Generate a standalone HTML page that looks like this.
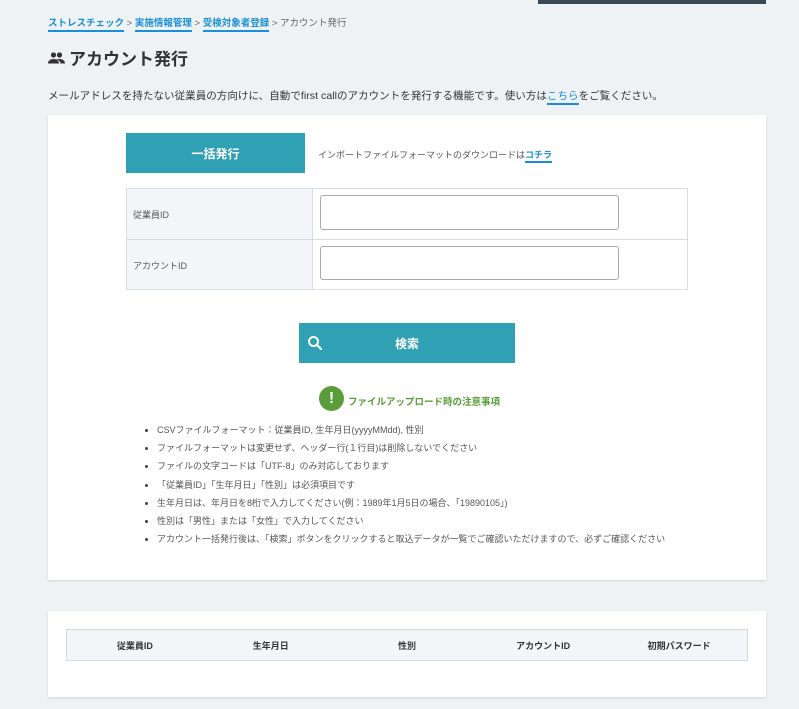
<!DOCTYPE html>
<html><head><meta charset="utf-8"><style>
*{margin:0;padding:0;box-sizing:border-box}
body{width:799px;height:709px;background:#eef2f5;font-family:"Liberation Sans","Noto Sans CJK JP",sans-serif;color:#333;position:relative;overflow:hidden}
.a{position:absolute;white-space:nowrap}
.lk{color:#1a8fd6;font-weight:bold;border-bottom:2px solid #1a8fd6;padding-bottom:1px}
.card{position:absolute;background:#fff;box-shadow:0 1px 2px rgba(0,0,0,.12)}
.btn{position:absolute;background:#30a1b4;color:#fff;font-weight:bold;font-size:12px;display:flex;align-items:center;justify-content:center}
li{font-size:9px;color:#555;line-height:18.2px;list-style:none;position:relative;padding-left:12px}
li:before{content:"";position:absolute;left:0;top:8px;width:3px;height:3px;background:#444;border-radius:50%}
th{font-size:9px;font-weight:bold;color:#333;text-align:center}
</style></head><body>
<div class="a" style="left:538px;top:0;width:228px;height:4px;background:#3a4856"></div>
<div class="a" style="left:48px;top:15px;font-size:9.5px;color:#666"><span class="lk">ストレスチェック</span> &gt; <span class="lk">実施情報管理</span> &gt; <span class="lk">受検対象者登録</span> &gt; アカウント発行</div>
<div class="a" style="left:48px;top:45px;font-size:17px;font-weight:bold;color:#333;display:flex;align-items:center">
<svg width="17" height="12" viewBox="0 0 17 12" style="margin-right:4px"><circle cx="5.5" cy="3" r="2.6" fill="#333"/><circle cx="11.5" cy="3" r="2.6" fill="#333"/><path d="M0 11.5c0-3 2.5-4.5 5.5-4.5s5.5 1.5 5.5 4.5z" fill="#333"/><path d="M8 7.3c1-.3 2.2-.4 3.5-.3 3 .1 5.5 1.5 5.5 4.5h-4.5c0-1.7-1.5-3.3-4.5-4.2z" fill="#333"/></svg>アカウント発行</div>
<div class="a" style="left:48px;top:88px;font-size:10.5px;color:#333;letter-spacing:0.05px">メールアドレスを持たない従業員の方向けに、自動でfirst callのアカウントを発行する機能です。使い方は<span class="lk" style="font-weight:normal">こちら</span>をご覧ください。</div>

<div class="card" style="left:48px;top:115px;width:718px;height:465px"></div>
<div class="btn" style="left:126px;top:133px;width:179px;height:40px">一括発行</div>
<div class="a" style="left:318px;top:148px;font-size:9px;color:#555">インポートファイルフォーマットのダウンロードは<span class="lk">コチラ</span></div>
<div class="a" style="left:126px;top:188px;width:562px;height:102px;border:1px solid #d8dde3"></div>
<div class="a" style="left:127px;top:189px;width:186px;height:100px;background:#f3f6f8;border-right:1px solid #d8dde3"></div>
<div class="a" style="left:127px;top:239px;width:560px;height:1px;background:#d8dde3"></div>
<div class="a" style="left:133px;top:208px;font-size:9px;color:#555">従業員ID</div>
<div class="a" style="left:133px;top:259px;font-size:9px;color:#555">アカウントID</div>
<div class="a" style="left:320px;top:195px;width:299px;height:35px;border:1px solid #aaa;border-radius:3px"></div>
<div class="a" style="left:320px;top:246px;width:299px;height:34px;border:1px solid #aaa;border-radius:3px"></div>
<div class="btn" style="left:299px;top:323px;width:216px;height:40px">検索</div>
<svg class="a" style="left:307px;top:335px" width="16" height="16" viewBox="0 0 16 16"><circle cx="6.5" cy="6.5" r="4.5" fill="none" stroke="#fff" stroke-width="2"/><path d="M10 10l4 4" stroke="#fff" stroke-width="2.2" stroke-linecap="round"/></svg>
<div class="a" style="left:319px;top:386px;width:25px;height:25px;border-radius:50%;background:#5b9c3a;color:#fff;font-weight:bold;font-size:16px;text-align:center;line-height:25px">!</div>
<div class="a" style="left:348px;top:394px;font-size:9.5px;font-weight:bold;color:#5b9c3a">ファイルアップロード時の注意事項</div>
<ul class="a" style="left:145px;top:421px">
<li>CSVファイルフォーマット：従業員ID, 生年月日(yyyyMMdd), 性別</li>
<li>ファイルフォーマットは変更せず、ヘッダー行(１行目)は削除しないでください</li>
<li>ファイルの文字コードは「UTF-8」のみ対応しております</li>
<li>「従業員ID」「生年月日」「性別」は必須項目です</li>
<li>生年月日は、年月日を8桁で入力してください(例：1989年1月5日の場合、「19890105」)</li>
<li>性別は「男性」または「女性」で入力してください</li>
<li>アカウント一括発行後は、「検索」ボタンをクリックすると取込データが一覧でご確認いただけますので、必ずご確認ください</li>
</ul>

<div class="card" style="left:48px;top:611px;width:718px;height:86px"></div>
<table class="a" style="left:66px;top:629px;width:682px;height:32px;border:1px solid #d3dae1;background:#f3f6f8;border-collapse:collapse;table-layout:fixed"><tr>
<th>従業員ID</th><th>生年月日</th><th>性別</th><th>アカウントID</th><th>初期パスワード</th></tr></table>
</body></html>
